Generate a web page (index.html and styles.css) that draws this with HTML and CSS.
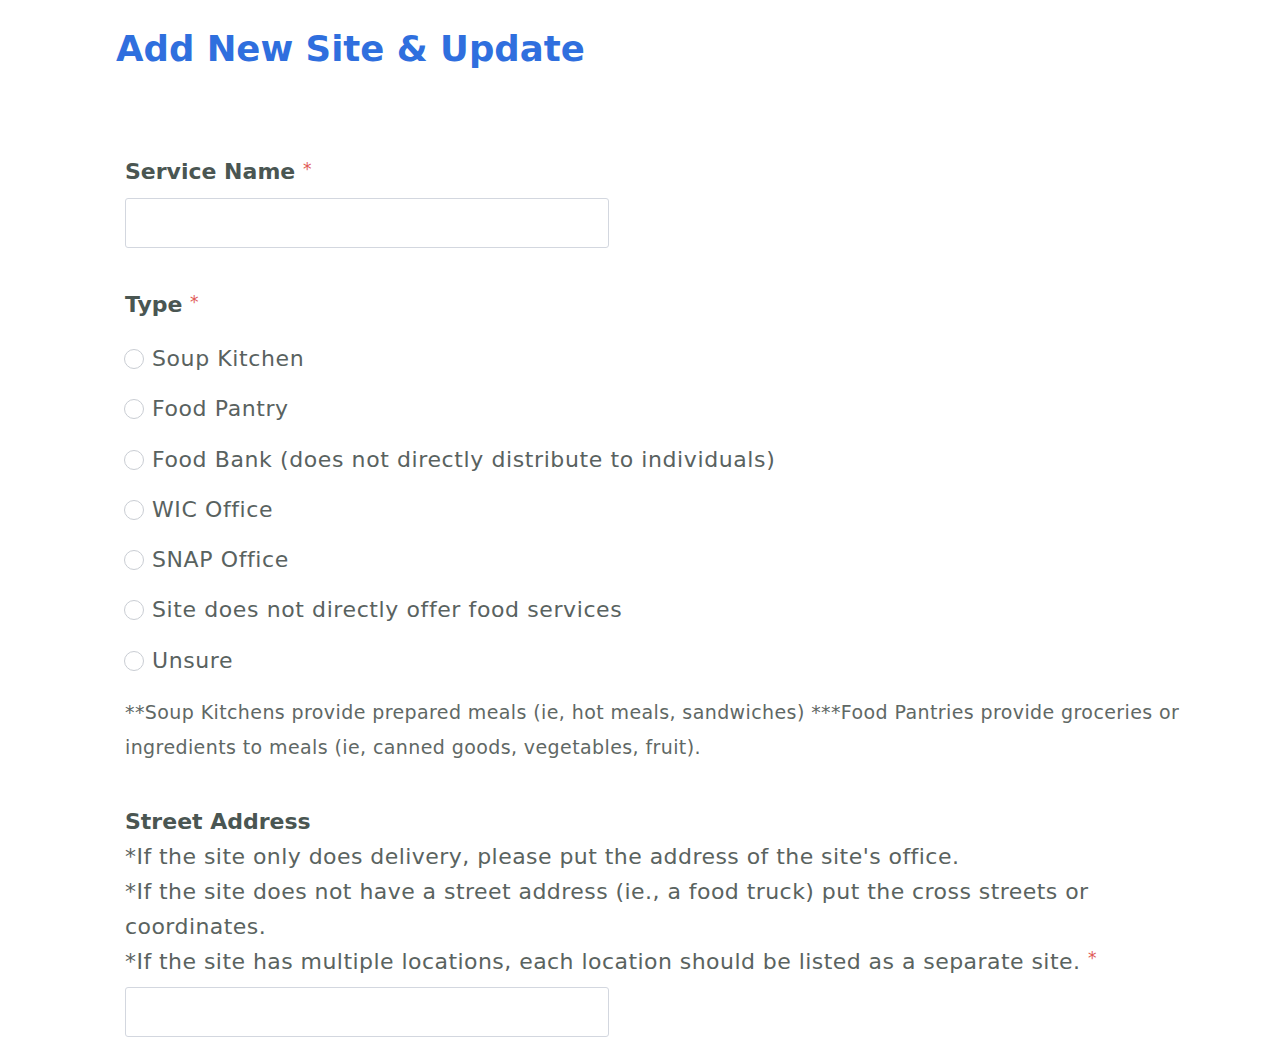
FILE: index.html
```html
<!DOCTYPE html>
<html lang="en">
<head>
    <meta charset="UTF-8">
    <meta name="viewport" content="width=device-width, initial-scale=1.0">
    <title>Add New Site &amp; Update</title>
    <link rel="stylesheet" href="styles.css">
</head>
<body>
    <div class="page">
        <h1 class="page-title">Add New Site &amp; Update</h1>

        <form class="site-form">
            <div class="field">
                <label class="field-label" for="serviceName">Service Name <span class="required">*</span></label>
                <input type="text" id="serviceName" class="text-input">
            </div>

            <div class="field">
                <div class="field-label">Type <span class="required">*</span></div>
                <div class="radio-list">
                    <label class="radio-item"><input type="radio" name="type"><span class="radio-dot"></span>Soup Kitchen</label>
                    <label class="radio-item"><input type="radio" name="type"><span class="radio-dot"></span>Food Pantry</label>
                    <label class="radio-item"><input type="radio" name="type"><span class="radio-dot"></span>Food Bank (does not directly distribute to individuals)</label>
                    <label class="radio-item"><input type="radio" name="type"><span class="radio-dot"></span>WIC Office</label>
                    <label class="radio-item"><input type="radio" name="type"><span class="radio-dot"></span>SNAP Office</label>
                    <label class="radio-item"><input type="radio" name="type"><span class="radio-dot"></span>Site does not directly offer food services</label>
                    <label class="radio-item"><input type="radio" name="type"><span class="radio-dot"></span>Unsure</label>
                </div>
                <p class="field-note">**Soup Kitchens provide prepared meals (ie, hot meals, sandwiches) ***Food Pantries provide groceries or ingredients to meals (ie, canned goods, vegetables, fruit).</p>
            </div>

            <div class="field">
                <label class="field-label" for="streetAddress">Street Address</label>
                <div class="field-desc">
                    *If the site only does delivery, please put the address of the site's office.<br>
                    *If the site does not have a street address (ie., a food truck) put the cross streets or coordinates.<br>
                    *If the site has multiple locations, each location should be listed as a separate site. <span class="required">*</span>
                </div>
                <input type="text" id="streetAddress" class="text-input">
            </div>
        </form>
    </div>
</body>
</html>
```

FILE: styles.css
```css
* {
    margin: 0;
    padding: 0;
    box-sizing: border-box;
}

body {
    background: #fff;
    font-family: 'DejaVu Sans', 'Open Sans', sans-serif;
    color: #5d6663;
}

.page {
    padding: 25px 0 0 116px;
    width: 1190px;
}

.page-title {
    font-size: 35.5px;
    font-weight: 700;
    color: #2f6fde;
    line-height: 48px;
}

.site-form {
    padding: 84px 0 0 9px;
}

.field {
    margin-bottom: 42px;
}

.field-label {
    display: block;
    font-size: 22px;
    font-weight: 700;
    color: #4a5652;
    line-height: 30px;
    margin-bottom: 11px;
}

.required {
    color: #e05a56;
    font-size: 17px;
    font-weight: 400;
    vertical-align: top;
    position: relative;
    top: -3px;
}

.text-input {
    display: block;
    width: 484px;
    height: 50px;
    border: 1px solid #d3d7df;
    border-radius: 3px;
    background: #fff;
    font-size: 18px;
    padding: 0 12px;
}

.radio-list {
    display: flex;
    flex-direction: column;
    gap: 20.3px;
    padding-top: 13px;
}

.radio-item {
    display: flex;
    align-items: center;
    font-size: 22px;
    line-height: 30px;
    letter-spacing: 0.6px;
    color: #59625f;
}

.radio-item input {
    display: none;
}

.radio-dot {
    width: 20px;
    height: 20px;
    border: 1px solid #c9cdd3;
    border-radius: 50%;
    margin: 0 8px 0 -1px;
    background: #fff;
}

.field-note {
    font-size: 19px;
    line-height: 35px;
    letter-spacing: 0.4px;
    color: #5f6865;
    margin-top: 19px;
}

.field-desc {
    font-size: 22px;
    line-height: 35px;
    letter-spacing: 0.45px;
    color: #5a6360;
    margin-top: -9px;
    margin-bottom: 8px;
}
```
